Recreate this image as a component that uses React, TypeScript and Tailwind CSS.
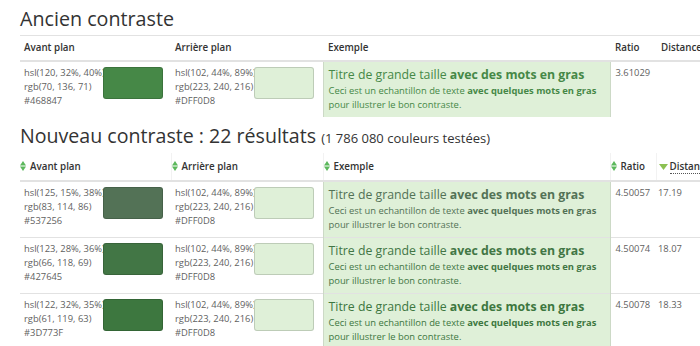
import React from "react"

type Row = {
    hsl: string
    rgb: string
    hex: string
    ratio: string
    distance?: string
}

const BG = { hsl: "hsl(102, 44%, 89%)", rgb: "rgb(223, 240, 216)", hex: "#DFF0D8" }

const oldRow: Row = { hsl: "hsl(120, 32%, 40%)", rgb: "rgb(70, 136, 71)", hex: "#468847", ratio: "3.61029" }

const newRows: Row[] = [
    { hsl: "hsl(125, 15%, 38%)", rgb: "rgb(83, 114, 86)", hex: "#537256", ratio: "4.50057", distance: "17.19" },
    { hsl: "hsl(123, 28%, 36%)", rgb: "rgb(66, 118, 69)", hex: "#427645", ratio: "4.50074", distance: "18.07" },
    { hsl: "hsl(122, 32%, 35%)", rgb: "rgb(61, 119, 63)", hex: "#3D773F", ratio: "4.50078", distance: "18.33" },
]

function SortBoth() {
    return (
        <svg width="6" height="10" viewBox="0 0 6 10" className="inline-block mr-[4px] -mt-[2px] align-middle">
            <path d="M3 0 L6 4.5 L0 4.5 Z" fill="#5cb85c" />
            <path d="M0 5.5 L6 5.5 L3 10 Z" fill="#5cb85c" />
        </svg>
    )
}

function SortDown() {
    return (
        <svg width="9" height="6" viewBox="0 0 9 6" className="inline-block mr-[2px] -mt-[1px] align-middle">
            <path d="M0 0 L9 0 L4.5 6 Z" fill="#8cc152" />
        </svg>
    )
}

function ColorCell({ hsl, rgb, hex }: { hsl: string, rgb: string, hex: string }) {
    return (
        <td className="pl-[4px] pt-[4px] pb-[6px] align-top">
            <div className="flex items-start">
                <div className="w-[79px] text-[9.4px] leading-[14px] text-[#5f5f5f] whitespace-nowrap">
                    <div>{hsl}</div>
                    <div>{rgb}</div>
                    <div>{hex}</div>
                </div>
                <div className="mt-[1px] w-[60px] h-[32px] rounded-[3px] border border-black/15" style={{ backgroundColor: hex }}></div>
            </div>
        </td>
    )
}

function ExampleCell({ fg }: { fg: string }) {
    return (
        <td className="bg-[#dff0d8] border-x border-[#ccd9c6] px-[5px] pt-[4px] pb-[5px] align-top" style={{ color: fg }}>
            <div className="text-[12.3px] leading-[18px] whitespace-nowrap">
                Titre de grande taille <b className="font-bold">avec des mots en gras</b>
            </div>
            <div className="text-[9.4px] leading-[14px] whitespace-nowrap">
                Ceci est un echantillon de texte <b className="font-bold">avec quelques mots en gras</b>
                <br />
                pour illustrer le bon contraste.
            </div>
        </td>
    )
}

function Cols() {
    return (
        <colgroup>
            <col className="w-[151px]" />
            <col className="w-[152px]" />
            <col className="w-[287px]" />
            <col className="w-[46px]" />
            <col className="w-[84px]" />
        </colgroup>
    )
}

const th = "text-left font-semibold text-[9.8px] leading-[16px] whitespace-nowrap"

export default function App() {
    return (
        <main className="w-[700px] h-[346px] overflow-hidden bg-white text-[#333] pl-[20px]" style={{ fontFamily: '"Open Sans", "DejaVu Sans", sans-serif' }}>
            <h2 className="pt-[6px] h-[35px] text-[19.7px] leading-[26px] font-medium text-[#333] whitespace-nowrap">Ancien contraste</h2>
            <table className="table-fixed border-collapse w-[720px]">
                <Cols />
                <thead>
                    <tr className="border-t border-b-2 border-[#e2e2e2]">
                        <th className={`${th} py-[4px] pl-[4px]`}>Avant plan</th>
                        <th className={`${th} py-[4px] pl-[4px]`}>Arrière plan</th>
                        <th className={`${th} py-[4px] pl-[5px]`}>Exemple</th>
                        <th className={`${th} py-[4px] pl-[5px]`}>Ratio</th>
                        <th className={`${th} py-[4px] pl-[5px]`}>Distance</th>
                    </tr>
                </thead>
                <tbody>
                    <tr>
                        <ColorCell hsl={oldRow.hsl} rgb={oldRow.rgb} hex={oldRow.hex} />
                        <ColorCell hsl={BG.hsl} rgb={BG.rgb} hex={BG.hex} />
                        <ExampleCell fg={oldRow.hex} />
                        <td className="align-top pl-[5px] pt-[4px] text-[9.4px] leading-[14px] text-[#5f5f5f]">{oldRow.ratio}</td>
                        <td></td>
                    </tr>
                </tbody>
            </table>

            <h2 className="mt-[6px] h-[30px] text-[19.6px] leading-[26px] font-medium text-[#333] whitespace-nowrap">
                Nouveau contraste : 22 résultats <span className="text-[13px]">(1 786 080 couleurs testées)</span>
            </h2>
            <table className="table-fixed border-collapse w-[720px]">
                <Cols />
                <thead>
                    <tr className="border-b-2 border-[#e2e2e2]">
                        <th className={`${th} pt-[6px] pb-[5px]`}><SortBoth />Avant plan</th>
                        <th className={`${th} pt-[6px] pb-[5px] border-l border-[#f2f2f2]`}><SortBoth />Arrière plan</th>
                        <th className={`${th} pt-[6px] pb-[5px] border-l border-[#f2f2f2]`}><SortBoth />Exemple</th>
                        <th className={`${th} pt-[6px] pb-[5px] border-l border-[#f2f2f2]`}><SortBoth />Ratio</th>
                        <th className={`${th} pt-[6px] pb-[5px] pl-[2px] border-l border-[#f2f2f2]`}>
                            <SortDown /><span className="border-b border-dotted border-[#555]">Distance</span>
                        </th>
                    </tr>
                </thead>
                <tbody>
                    {newRows.map((row) => (
                        <tr key={row.hex} className="border-b border-[#e2e2e2]">
                            <ColorCell hsl={row.hsl} rgb={row.rgb} hex={row.hex} />
                            <ColorCell hsl={BG.hsl} rgb={BG.rgb} hex={BG.hex} />
                            <ExampleCell fg={row.hex} />
                            <td className="align-top pl-[5px] pt-[4px] text-[9.4px] leading-[14px] text-[#5f5f5f]">{row.ratio}</td>
                            <td className="align-top pl-[2px] pt-[4px] text-[9.4px] leading-[14px] text-[#5f5f5f]">{row.distance}</td>
                        </tr>
                    ))}
                </tbody>
            </table>
        </main>
    )
}
